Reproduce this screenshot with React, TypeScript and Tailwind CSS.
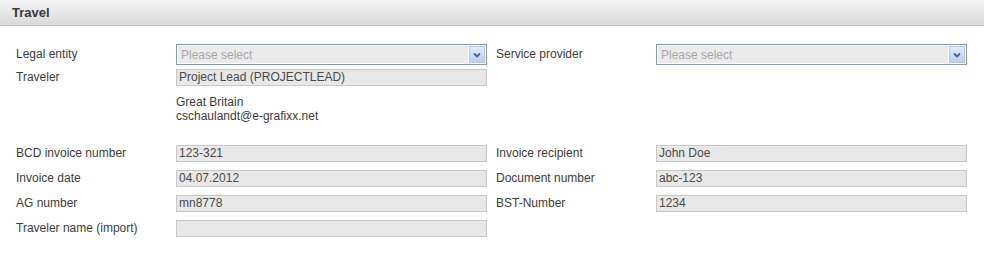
import { type FC, type ReactNode } from 'react';

const font = { fontFamily: '"Liberation Sans", Arial, sans-serif' };

const Label: FC<{ children?: ReactNode }> = ({ children }) => (
    <div className="w-[160px] shrink-0 mb-[2px] text-[12px] leading-[14px] text-[#3c3c3c]">{children}</div>
);

const Field: FC<{ value?: string }> = ({ value }) => (
    <div className="w-[311px] h-[17px] shrink-0 border border-[#c8c8c8] bg-[#e8e8e8] px-[2px] text-[12px] leading-[15px] text-[#4a4a4a]">
        {value}
    </div>
);

const Select: FC = () => (
    <div className="w-[311px] h-[21px] shrink-0 flex items-center border border-[#7f9db9] bg-white p-[1px]">
        <div className="flex-1 h-full bg-[#ebebeb] px-[3px] text-[12px] leading-[18px] text-[#a8a8a8]">Please select</div>
        <div className="w-[16px] h-full ml-[1px] flex items-center justify-center border border-[#b8c8ea] bg-gradient-to-b from-[#e3ebfb] to-[#b9cdf4]">
            <svg width="8" height="6" viewBox="0 0 8 6">
                <path d="M1 1.5 L4 4.5 L7 1.5" fill="none" stroke="#4d6185" strokeWidth="1.8" />
            </svg>
        </div>
    </div>
);

const Row: FC<{ children: ReactNode; className?: string }> = ({ children, className }) => (
    <div className={`flex items-center ${className ?? ''}`}>{children}</div>
);

export default function App() {
    return (
        <div className="w-[984px] h-[253px] bg-white" style={font}>
            {/* Header */}
            <div className="h-[26px] border-b border-[#c2c2c2] bg-gradient-to-b from-[#f6f6f6] to-[#d9d9d9] pl-[12px] text-[13px] font-bold leading-[26px] text-[#3a3a3a]">
                Travel
            </div>

            <div className="pl-[16px] pt-[18px]">
                <Row>
                    <Label>Legal entity</Label>
                    <Select />
                    <div className="w-[9px]" />
                    <Label>Service provider</Label>
                    <Select />
                </Row>
                <Row className="mt-[4px]">
                    <Label>Traveler</Label>
                    <Field value="Project Lead (PROJECTLEAD)" />
                </Row>
                <div className="ml-[160px] mt-[9px] text-[12px] leading-[14px] text-[#3c3c3c]">
                    <div>Great Britain</div>
                    <div>cschaulandt@e-grafixx.net</div>
                </div>

                <div className="mt-[22px] flex flex-col gap-[8px]">
                    <Row>
                        <Label>BCD invoice number</Label>
                        <Field value="123-321" />
                        <div className="w-[9px]" />
                        <Label>Invoice recipient</Label>
                        <Field value="John Doe" />
                    </Row>
                    <Row>
                        <Label>Invoice date</Label>
                        <Field value="04.07.2012" />
                        <div className="w-[9px]" />
                        <Label>Document number</Label>
                        <Field value="abc-123" />
                    </Row>
                    <Row>
                        <Label>AG number</Label>
                        <Field value="mn8778" />
                        <div className="w-[9px]" />
                        <Label>BST-Number</Label>
                        <Field value="1234" />
                    </Row>
                    <Row>
                        <Label>Traveler name (import)</Label>
                        <Field />
                    </Row>
                </div>
            </div>
        </div>
    );
}
